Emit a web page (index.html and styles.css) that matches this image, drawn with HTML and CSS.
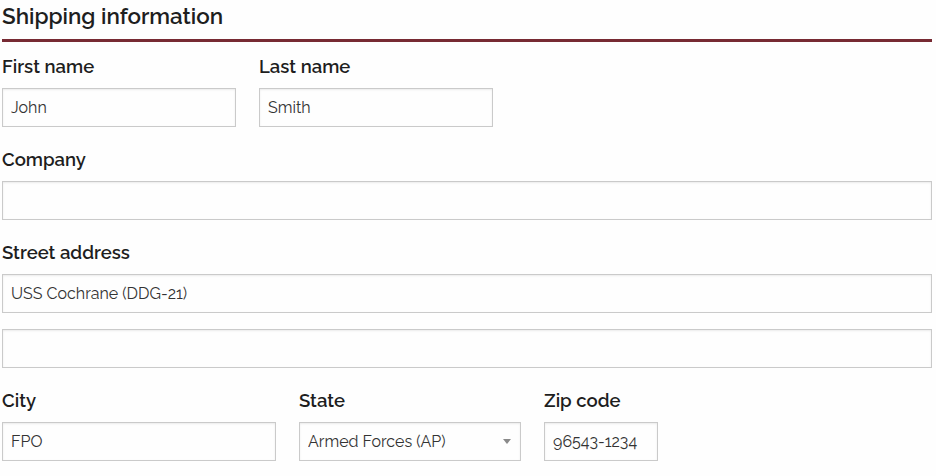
FILE: index.html
```html
<!DOCTYPE html>
<html lang="en">
<head>
<meta charset="utf-8">
<title>Shipping information</title>
<link rel="stylesheet" href="styles.css">
</head>
<body>
<section class="shipping">
  <h2 class="title">Shipping information</h2>
  <form class="form">
    <div class="row">
      <div class="field w-first">
        <label class="label">First name</label>
        <input class="input" type="text" value="John">
      </div>
      <div class="field w-first">
        <label class="label">Last name</label>
        <input class="input" type="text" value="Smith">
      </div>
    </div>
    <div class="field">
      <label class="label">Company</label>
      <input class="input" type="text" value="">
    </div>
    <div class="field">
      <label class="label">Street address</label>
      <input class="input input-stack" type="text" value="USS Cochrane (DDG-21)">
      <input class="input" type="text" value="">
    </div>
    <div class="row">
      <div class="field w-city">
        <label class="label">City</label>
        <input class="input" type="text" value="FPO">
      </div>
      <div class="field w-state">
        <label class="label">State</label>
        <div class="select-wrap">
          <select class="input select">
            <option>Armed Forces (AP)</option>
          </select>
        </div>
      </div>
      <div class="field w-zip">
        <label class="label">Zip code</label>
        <input class="input" type="text" value="96543-1234">
      </div>
    </div>
  </form>
</section>
</body>
</html>
```

FILE: styles.css
```css
html, body {
  margin: 0;
  padding: 0;
  background: #fefefe;
}
body {
  padding: 0 4px 0 2px;
  font-family: "Raleway", "Lato", "Open Sans", sans-serif;
  color: #1f1f1f;
}
.title {
  margin: 0;
  padding: 2px 0 9px;
  font-size: 22.4px;
  line-height: 28px;
  font-weight: 600;
  color: #1e1e1e;
  border-bottom: 3px solid #772a33;
}
.form {
  margin-top: 12px;
}
.row {
  display: flex;
  gap: 23px;
}
.field {
  margin-bottom: 20px;
}
.label {
  display: block;
  font-size: 18.5px;
  line-height: 24px;
  padding-top: 1px;
  font-weight: 600;
  margin-bottom: 9px;
  color: #1e1e1e;
}
.w-first { width: 234px; }
.w-city { width: 274px; }
.w-state { width: 222px; }
.w-zip { width: 114px; }
.input {
  display: block;
  width: 100%;
  box-sizing: border-box;
  height: 39px;
  margin: 0;
  padding: 0 8px;
  border: 1px solid #cacaca;
  border-radius: 0;
  background: #fefefe;
  box-shadow: inset 0 1px 2px rgba(0, 0, 0, 0.08);
  font-family: inherit;
  font-size: 16px;
  color: #333;
  outline: none;
}
.input-stack {
  margin-bottom: 16px;
}
.select-wrap {
  position: relative;
}
.select {
  appearance: none;
  -webkit-appearance: none;
  padding-right: 24px;
}
.select-wrap::after {
  content: "";
  position: absolute;
  right: 10px;
  top: 17px;
  border-left: 4px solid transparent;
  border-right: 4px solid transparent;
  border-top: 5px solid #8a8a8a;
  pointer-events: none;
}
```
